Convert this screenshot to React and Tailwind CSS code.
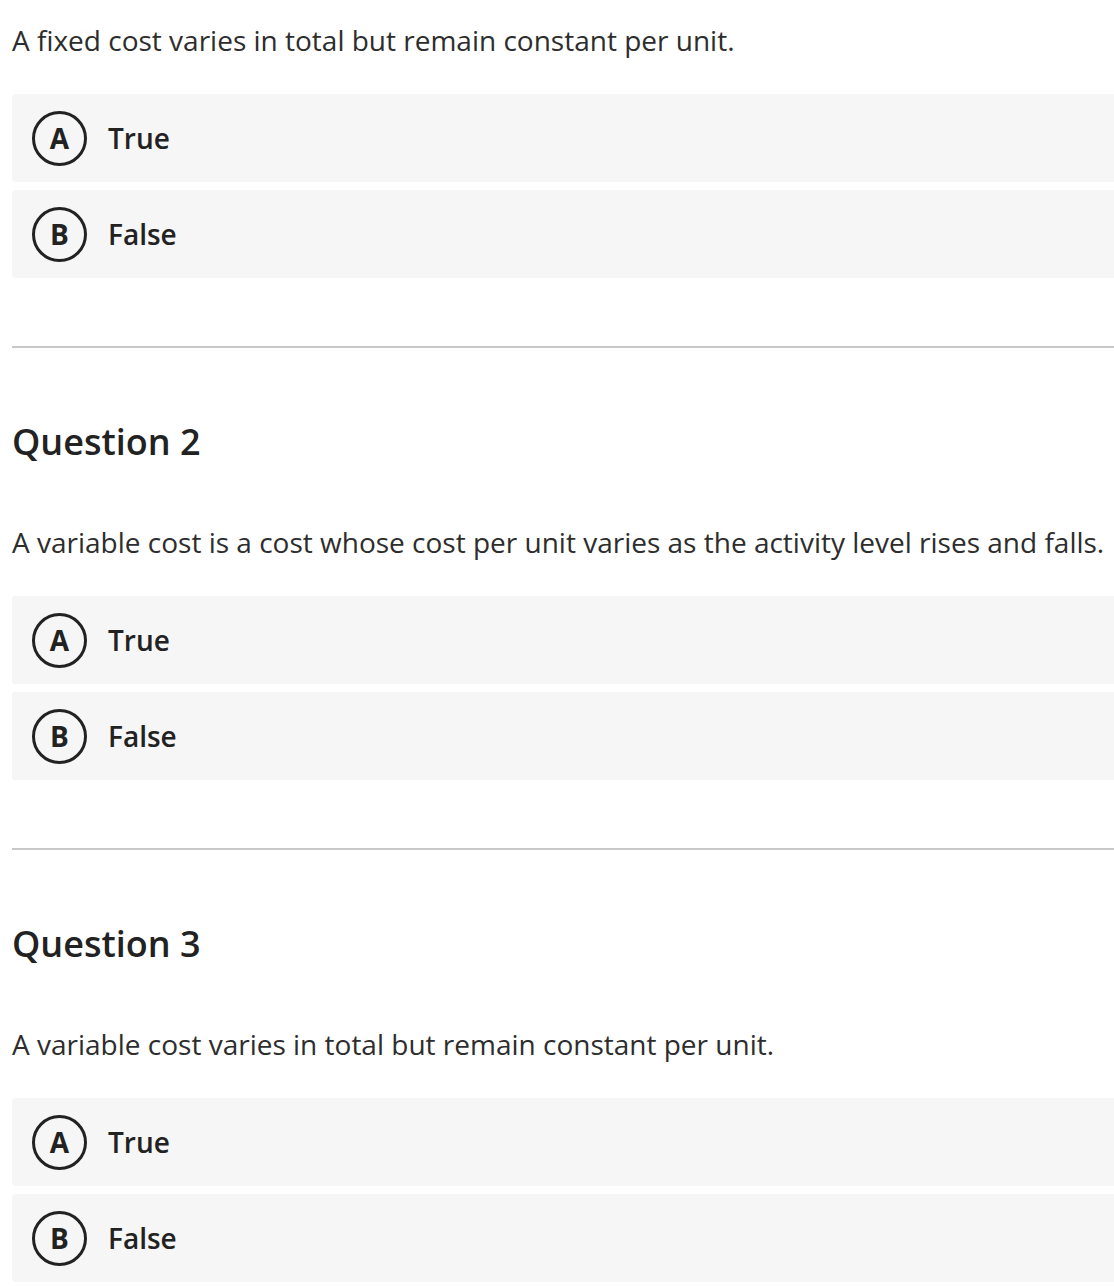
const QUESTIONS = [
  { title: null, text: 'A fixed cost varies in total but remain constant per unit.' },
  { title: 'Question 2', text: 'A variable cost is a cost whose cost per unit varies as the activity level rises and falls.' },
  { title: 'Question 3', text: 'A variable cost varies in total but remain constant per unit.' },
]

const OPTIONS = [
  { key: 'A', label: 'True' },
  { key: 'B', label: 'False' },
]

function Option({ opt }) {
  return (
    <div className="flex items-center h-[88px] pl-5 bg-[#f6f6f6] rounded-l-[3px]">
      <span className="flex items-center justify-center w-[55px] h-[55px] rounded-full border-[3px] border-[#222] text-[28px] font-bold text-[#222] leading-none">
        {opt.key}
      </span>
      <span className="ml-[21px] text-[28px] font-semibold text-[#222]">{opt.label}</span>
    </div>
  )
}

function Question({ q }) {
  return (
    <section>
      {q.title && (
        <h2 className="pt-[74px] text-[36px] font-semibold text-[#222] leading-[40px]">{q.title}</h2>
      )}
      <p className={`${q.title ? 'mt-[62px]' : 'mt-[22px]'} text-[28px] text-[#2d2d2d] leading-[36px]`}>{q.text}</p>
      <div className="mt-[36px] flex flex-col gap-2">
        {OPTIONS.map(o => <Option key={o.key} opt={o} />)}
      </div>
    </section>
  )
}

export default function App() {
  return (
    <div className="w-[1114px] pl-3 bg-white" style={{ fontFamily: '"Open Sans", sans-serif' }}>
      {QUESTIONS.map((q, i) => (
        <div key={i}>
          {i > 0 && <div className="mt-[68px] h-[2px] bg-[#c8c8c8]" />}
          <Question q={q} />
        </div>
      ))}
    </div>
  )
}
